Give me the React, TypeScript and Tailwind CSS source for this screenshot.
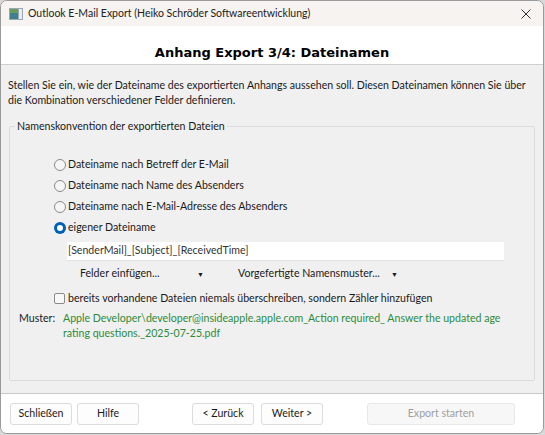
import React from "react";

const font = { fontFamily: 'Lato, "Noto Sans", sans-serif' };

const Radio: React.FC<{ checked?: boolean; label: string }> = ({ checked, label }) => (
  <div className="flex items-center h-[21px]">
    {checked ? (
      <span className="w-[12px] h-[12px] rounded-full bg-[#005fb8] flex items-center justify-center mr-[2px]">
        <span className="w-[6px] h-[6px] rounded-full bg-white" />
      </span>
    ) : (
      <span className="w-[12px] h-[12px] rounded-full border border-[#8a8a8a] bg-[#f6f6f6] mr-[2px]" />
    )}
    <span className="text-[10.6px] text-[#1a1a1a]">{label}</span>
  </div>
);

const Btn: React.FC<{ label: string; w: string; disabled?: boolean }> = ({ label, w, disabled }) => (
  <button
    className={`${w} h-[22px] rounded-[3px] border text-[10.6px] ${
      disabled ? "bg-[#f7f7f7] border-[#e8e8e8] text-[#a0a0a0]" : "bg-[#fdfdfd] border-[#dcdcdc] text-[#1a1a1a]"
    }`}
  >
    {label}
  </button>
);

const App: React.FC = () => {
  return (
    <div className="w-[545px] h-[435px] bg-[#d8d8d8]" style={font}>
      <div className="w-[544px] h-[434px] rounded-[7px] overflow-hidden border border-[#9a9a9a] flex flex-col bg-white">
        {/* title bar */}
        <div className="h-[25px] bg-[#f6f3f0] flex items-center pl-[8px] pr-[12px]">
          <svg width="14" height="12" viewBox="0 0 14 12" className="mr-[5px]">
            <rect x="0" y="0" width="14" height="12" fill="#9aa6b2" />
            <rect x="1" y="1" width="8" height="10" fill="#3f7f8e" />
            <rect x="1" y="1" width="8" height="4" fill="#6a9a5c" />
            <rect x="10" y="1" width="3" height="10" fill="#e8ecef" />
          </svg>
          <span className="text-[10.5px] text-[#222] flex-1">Outlook E-Mail Export (Heiko Schröder Softwareentwicklung)</span>
          <svg width="10" height="10" viewBox="0 0 10 10">
            <path d="M0.5 0.5 L9.5 9.5 M9.5 0.5 L0.5 9.5" stroke="#333" strokeWidth="1" />
          </svg>
        </div>
        {/* header */}
        <div className="h-[39px] bg-white flex items-center justify-center border-b border-[#d0d0d0]">
          <span
            className="text-[13px] font-bold text-black pt-[15px]"
            style={{ fontFamily: '"DejaVu Sans", Verdana, sans-serif' }}
          >
            Anhang Export 3/4: Dateinamen
          </span>
        </div>
        {/* body */}
        <div className="flex-1 bg-[#f0f0f0] flex flex-col border-b border-[#c8c8c8]">
          <p className="text-[10.6px] leading-[15px] text-[#1a1a1a] px-[7px] pt-[13px]">
            Stellen Sie ein, wie der Dateiname des exportierten Anhangs aussehen soll. Diesen Dateinamen können Sie über
            die Kombination verschiedener Felder definieren.
          </p>
          <div className="relative mx-[8px] mt-[18px] mb-[12px] flex-1 border border-[#dcdcdc] rounded-[2px]">
            <span className="absolute -top-[9px] left-[5px] px-[2px] bg-[#f0f0f0] text-[10.6px] text-[#1a1a1a] leading-[16px]">
              Namenskonvention der exportierten Dateien
            </span>
            <div className="pl-[44px] pt-[27px]">
              <Radio label="Dateiname nach Betreff der E-Mail" />
              <Radio label="Dateiname nach Name des Absenders" />
              <Radio label="Dateiname nach E-Mail-Adresse des Absenders" />
              <Radio checked label="eigener Dateiname" />
              <div className="ml-[13px] mt-[4px] w-[437px] h-[19px] bg-white border-b border-[#e4e4e4] flex items-center px-[1px] text-[10.6px] text-[#333]">
                [SenderMail]_[Subject]_[ReceivedTime]
              </div>
              <div className="flex items-center h-[22px] mt-[2px] text-[10.6px] text-[#1a1a1a] whitespace-nowrap">
                <span className="ml-[26px] w-[117px]">Felder einfügen...</span>
                <span className="text-[7px] w-[41px]">▼</span>
                <span className="w-[153px]">Vorgefertigte Namensmuster...</span>
                <span className="text-[7px]">▼</span>
              </div>
              <div className="flex items-center h-[21px] mt-[3px]">
                <span className="w-[11px] h-[11px] border border-[#8a8a8a] bg-[#f8f8f8] rounded-[2px] mr-[3px]" />
                <span className="text-[10.6px] text-[#1a1a1a]">
                  bereits vorhandene Dateien niemals überschreiben, sondern Zähler hinzufügen
                </span>
              </div>
            </div>
            <div className="flex pl-[9px] pt-[2px] text-[10.6px] leading-[15px]">
              <span className="w-[44px] text-[#1a1a1a]">Muster:</span>
              <span className="text-[#2e8b3a] w-[450px]">
                Apple Developer\developer@insideapple.apple.com_Action required_ Answer the updated age rating
                questions._2025-07-25.pdf
              </span>
            </div>
          </div>
        </div>
        {/* footer */}
        <div className="h-[39px] bg-white flex items-center px-[9px]">
          <Btn label="Schließen" w="w-[62px]" />
          <div className="w-[5px]" />
          <Btn label="Hilfe" w="w-[62px]" />
          <div className="w-[53px]" />
          <Btn label="< Zurück" w="w-[62px]" />
          <div className="w-[7px]" />
          <Btn label="Weiter >" w="w-[62px]" />
          <div className="w-[44px]" />
          <Btn label="Export starten" w="w-[148px]" disabled />
        </div>
      </div>
    </div>
  );
};

export default App;
